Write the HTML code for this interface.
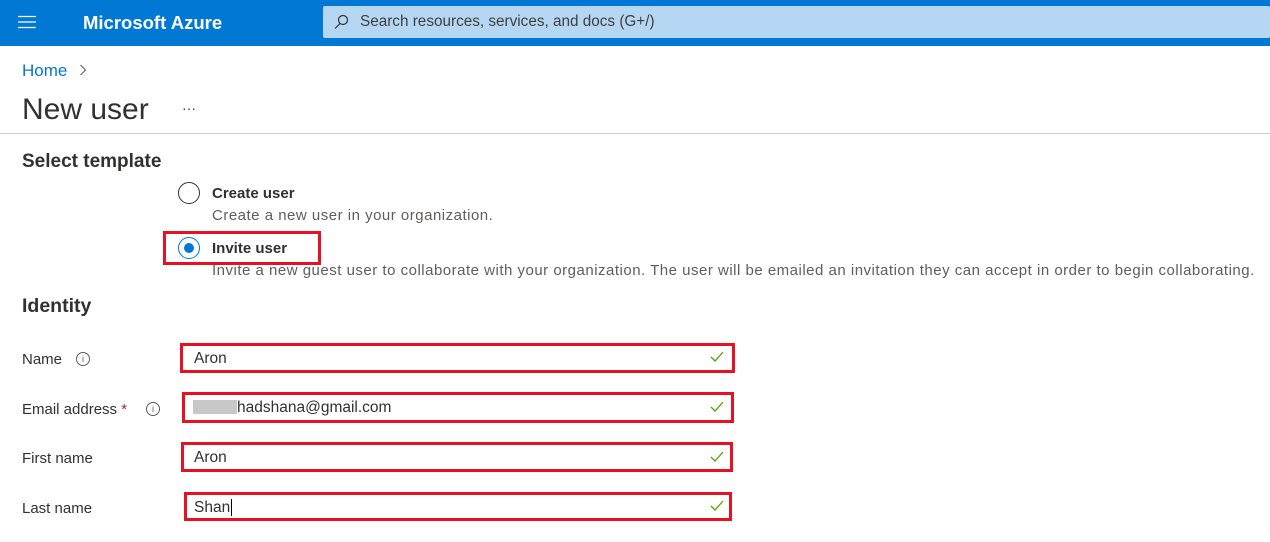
<!DOCTYPE html>
<html><head><meta charset="utf-8"><style>
*{margin:0;padding:0;box-sizing:border-box}
body{width:1270px;height:542px;background:#fff;font-family:"Liberation Sans",sans-serif;color:#323130;position:relative;overflow:hidden}
.a{position:absolute;white-space:nowrap}
.top{position:absolute;left:0;top:0;width:1270px;height:46px;background:#0078d4}
.search{position:absolute;left:323px;top:6px;width:947px;height:32px;background:#b5d7f3;border-radius:2px}
.box{position:absolute;border:3px solid #e81123}
.inp{position:absolute;font-size:15.5px;color:#323130}
.chk{position:absolute;width:14px;height:12px}
.lbl{font-size:15px;color:#323130}
.desc{font-size:15px;letter-spacing:.5px;color:#605e5c}
</style></head><body>
<div class="top"></div>
<svg class="a" style="left:18px;top:15px" width="18" height="14"><path d="M0 1.5h18M0 7h18M0 12.5h18" stroke="#fff" stroke-width="1.3"/></svg>
<div class="a" style="left:83px;top:12px;font-size:18.5px;font-weight:bold;color:#fff">Microsoft Azure</div>
<div class="search"></div>
<svg class="a" style="left:333px;top:14px" width="16" height="16"><circle cx="10" cy="6" r="4.5" fill="none" stroke="#323130" stroke-width="1.2"/><path d="M7 9.5L2 14.5" stroke="#323130" stroke-width="1.2"/></svg>
<div class="a" style="left:360px;top:13px;font-size:15.3px;color:#404040">Search resources, services, and docs (G+/)</div>
<div class="a" style="left:22px;top:61px;font-size:17px;color:#0078d4">Home</div>
<svg class="a" style="left:79px;top:64px" width="8" height="12"><path d="M1.5 1l5 5-5 5" fill="none" stroke="#605e5c" stroke-width="1.1"/></svg>
<div class="a" style="left:22px;top:93px;font-size:30px;color:#323130">New user</div>
<div class="a" style="left:182px;top:100px;font-size:14px;color:#323130">···</div>
<div class="a" style="left:0;top:133px;width:1270px;height:1px;background:#d2d0ce"></div>
<div class="a" style="left:22px;top:151px;font-size:19px;font-weight:bold">Select template</div>
<div class="a" style="left:178px;top:182px;width:22px;height:22px;border:1.5px solid #323130;border-radius:50%"></div>
<div class="a" style="left:212px;top:185px;font-size:15px;font-weight:bold">Create user</div>
<div class="a desc" style="left:212px;top:207px">Create a new user in your organization.</div>
<div class="a" style="left:178px;top:237px;width:22px;height:22px;border:1.5px solid #0078d4;border-radius:50%"></div>
<div class="a" style="left:184px;top:243px;width:10px;height:10px;background:#0078d4;border-radius:50%"></div>
<div class="box" style="left:163px;top:231px;width:158px;height:34px"></div>
<div class="a" style="left:212px;top:240px;font-size:15px;font-weight:bold">Invite user</div>
<div class="a desc" style="left:212px;top:262px">Invite a new guest user to collaborate with your organization. The user will be emailed an invitation they can accept in order to begin collaborating.</div>
<div class="a" style="left:22px;top:295px;font-size:19.5px;font-weight:bold">Identity</div>

<div class="a lbl" style="left:22px;top:351px">Name</div>
<div class="a" style="left:76px;top:352px;width:14px;height:14px;border:1px solid #605e5c;border-radius:50%;font-size:9px;text-align:center;line-height:12px;color:#605e5c">i</div>
<div class="a lbl" style="left:22px;top:401px">Email address <span style="color:#a4262c">*</span></div>
<div class="a" style="left:146px;top:402px;width:14px;height:14px;border:1px solid #605e5c;border-radius:50%;font-size:9px;text-align:center;line-height:12px;color:#605e5c">i</div>
<div class="a lbl" style="left:22px;top:450px">First name</div>
<div class="a lbl" style="left:22px;top:500px">Last name</div>

<div class="box" style="left:180px;top:343px;width:555px;height:30px"></div>
<div class="inp a" style="left:194px;top:350px">Aron</div>
<div class="box" style="left:182px;top:392px;width:552px;height:31px"></div>
<div class="a" style="left:193px;top:400px;width:44px;height:14px;background:#c8c8c8"></div>
<div class="inp a" style="left:237px;top:399px">hadshana@gmail.com</div>
<div class="box" style="left:181px;top:442px;width:552px;height:30px"></div>
<div class="inp a" style="left:194px;top:449px">Aron</div>
<div class="box" style="left:184px;top:492px;width:548px;height:29px"></div>
<div class="inp a" style="left:194px;top:499px">Shan<span style="border-left:1px solid #000;margin-left:1px"></span></div>

<svg class="chk" style="left:710px;top:351px"><path d="M1 6l4 4 8-9" fill="none" stroke="#57a300" stroke-width="1.3"/></svg>
<svg class="chk" style="left:710px;top:401px"><path d="M1 6l4 4 8-9" fill="none" stroke="#57a300" stroke-width="1.3"/></svg>
<svg class="chk" style="left:710px;top:451px"><path d="M1 6l4 4 8-9" fill="none" stroke="#57a300" stroke-width="1.3"/></svg>
<svg class="chk" style="left:710px;top:500px"><path d="M1 6l4 4 8-9" fill="none" stroke="#57a300" stroke-width="1.3"/></svg>
</body></html>
